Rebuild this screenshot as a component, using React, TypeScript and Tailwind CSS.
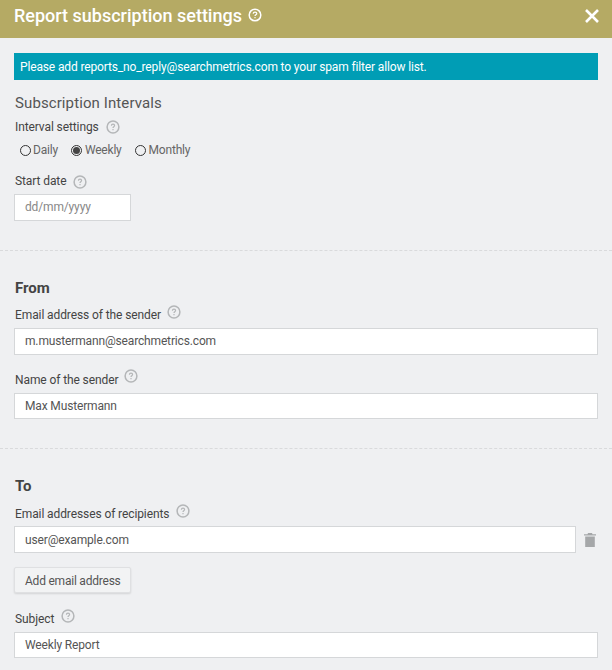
const HelpIcon = ({ className = "" }: { className?: string }) => (
  <svg viewBox="0 0 14 14" className={"w-[14px] h-[14px] text-[#b4b6b8] " + className} fill="none" stroke="currentColor">
    <circle cx="7" cy="7" r="5.9" strokeWidth="1.5" />
    <path d="M5.4 5.7c0-.9.7-1.5 1.6-1.5s1.6.6 1.6 1.4c0 1.2-1.6 1.2-1.6 2.4" strokeWidth="1.2" />
    <path d="M7 9.1v1.1" strokeWidth="1.2" />
  </svg>
)

const Radio = ({ label, checked, className = "" }: { label: string; checked?: boolean; className?: string }) => (
  <label className={"flex items-center tracking-[-0.2px] " + className}>
    <span className="w-[11px] h-[11px] rounded-full border border-[#333] flex items-center justify-center">
      {checked && <span className="w-[7px] h-[7px] rounded-full bg-[#444]" />}
    </span>
    <span>{label}</span>
  </label>
)

const TextField = ({ value, className = "" }: { value: string; className?: string }) => (
  <div className={"bg-white border border-[#d5d7d9] pl-[10px] flex items-center text-[12px] tracking-[-0.15px] text-[#555] " + className}>
    {value}
  </div>
)

export default function App() {
  return (
    <div className="w-[612px] h-[670px] overflow-hidden bg-[#eff0f2] text-[#444] font-['Roboto',sans-serif]">
      <header className="h-[38px] bg-[#b5aa64] flex items-center justify-between pl-[14px] pr-[13px] pb-[6px] text-white">
        <div className="flex items-center gap-[6px]">
          <h1 className="text-[18px] font-medium leading-[32px]">Report subscription settings</h1>
          <svg viewBox="0 0 14 14" className="w-[14px] h-[14px] -mt-[3px]" fill="none" stroke="currentColor">
            <circle cx="7" cy="7" r="5.8" strokeWidth="1.5" />
            <path d="M5.2 5.7c0-1 .8-1.6 1.8-1.6s1.8.6 1.8 1.5c0 1.2-1.8 1.2-1.8 2.4" strokeWidth="1.2" />
            <path d="M7 9v1.2" strokeWidth="1.2" />
          </svg>
        </div>
        <svg viewBox="0 0 14 14" className="w-[14px] h-[14px]" stroke="currentColor" strokeWidth="2.6">
          <path d="M1 1l12 12M13 1L1 13" />
        </svg>
      </header>

      <section className="px-[14px] pt-[15px] h-[213px] border-b border-dashed border-[#d9dadc]">
        <div className="h-[27px] bg-[#009db5] text-white text-[12px] tracking-[-0.14px] pl-[6px] flex items-center">
          Please add reports_no_reply@searchmetrics.com to your spam filter allow list.
        </div>
        <h2 className="mt-[14px] text-[15px] leading-[18px] tracking-[0.1px] pl-px text-[#555]">Subscription Intervals</h2>
        <div className="mt-[7px] flex items-center gap-[7px] text-[12px] leading-[14px] tracking-[-0.1px] pl-px">
          Interval settings <HelpIcon className="mt-px" />
        </div>
        <div className="mt-[9px] flex pl-[6px] text-[12px] leading-[14px] text-[#666]">
          <Radio label="Daily" className="gap-[2px]" />
          <Radio label="Weekly" checked className="gap-[3px] ml-[13px]" />
          <Radio label="Monthly" className="gap-[3px] ml-[13px]" />
        </div>
        <div className="mt-[16px] flex items-center gap-[7px] text-[12px] leading-[14px] tracking-[-0.1px] pl-px">
          Start date <HelpIcon className="mt-[2px]" />
        </div>
        <TextField value="dd/mm/yyyy" className="mt-[5px] h-[27px] pb-[2px] w-[117px] text-[#888]" />
      </section>

      <section className="px-[14px] pt-[28px] h-[198px] border-b border-dashed border-[#d9dadc]">
        <h2 className="text-[15px] leading-[18px] font-bold pl-px">From</h2>
        <div className="mt-[11px] flex items-center gap-[6px] text-[12px] leading-[14px] tracking-[-0.1px] pl-px">
          Email address of the sender <HelpIcon className="-mt-[6px]" />
        </div>
        <TextField value="m.mustermann@searchmetrics.com" className="mt-[6px] h-[27px] pb-[2px]" />
        <div className="mt-[18px] flex items-center gap-[6px] text-[12px] leading-[14px] tracking-[-0.1px] pl-px">
          Name of the sender <HelpIcon className="-mt-[8px]" />
        </div>
        <TextField value="Max Mustermann" className="mt-[6px] h-[26px]" />
      </section>

      <section className="px-[14px] pt-[28px]">
        <h2 className="text-[15px] leading-[18px] font-bold pl-px">To</h2>
        <div className="mt-[12px] flex items-center gap-[7px] text-[12px] leading-[14px] tracking-[-0.1px] pl-px">
          Email addresses of recipients <HelpIcon className="-mt-[6px]" />
        </div>
        <div className="mt-[5px] flex items-center">
          <TextField value="user@example.com" className="flex-1 h-[27px]" />
          <svg viewBox="0 0 12 14" className="w-[12px] h-[14px] ml-[8px] mr-[2px] text-[#a5a7a9]" fill="currentColor">
            <path d="M4 0h4l.5 1.2H12v1.4H0V1.2h3.5L4 0zM1.2 3.6h9.6V14H1.2z" />
          </svg>
        </div>
        <button className="mt-[14px] block h-[26px] w-[117px] pl-[10px] pt-px text-left bg-[#f2f3f4] border border-[#dfe0e2] rounded-[2px] shadow-[0_1px_2px_rgba(0,0,0,0.12)] text-[12px] tracking-[-0.22px] text-[#555]">
          Add email address
        </button>
        <div className="mt-[19px] flex items-center gap-[7px] text-[12px] leading-[14px] tracking-[-0.1px] pl-px">
          Subject <HelpIcon className="-mt-[6px]" />
        </div>
        <TextField value="Weekly Report" className="mt-[6px] h-[26px]" />
      </section>
    </div>
  )
}
